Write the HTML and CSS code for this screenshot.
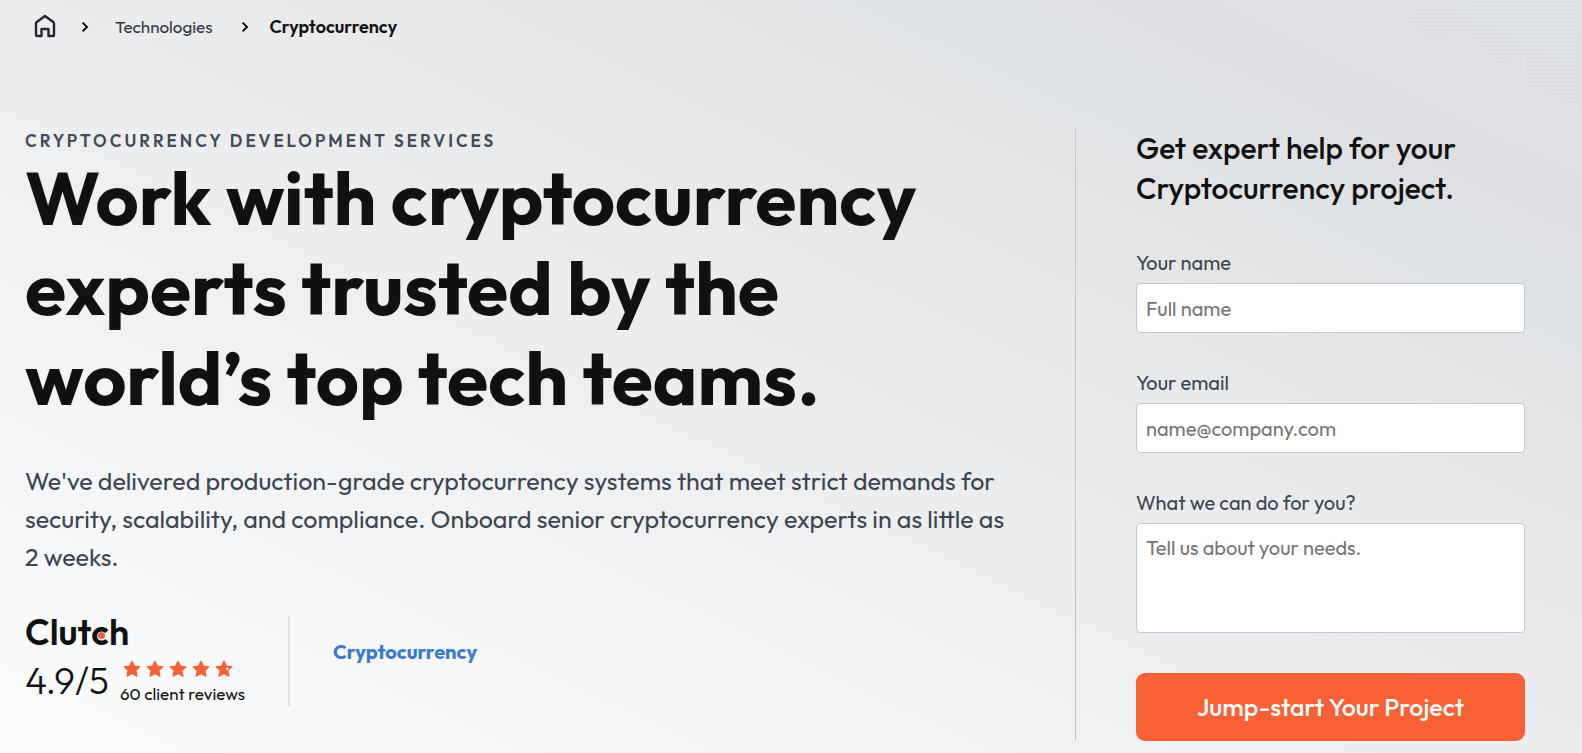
FILE: index.html
```html
<!DOCTYPE html>
<html lang="en">
<head>
<meta charset="utf-8">
<meta name="viewport" content="width=device-width, initial-scale=1">
<title>Cryptocurrency Development Services</title>
<link rel="stylesheet" href="styles.css">
</head>
<body>
<svg class="defs" aria-hidden="true">
  <symbol id="chevron" viewBox="0 0 8 12"><path d="M1.6 1.6 6 6 1.6 10.4" fill="none" stroke="currentColor" stroke-width="2"/></symbol>
  <symbol id="star" viewBox="0 0 18 18"><path d="M9 1.300 11.400 6.100 16.800 6.800 12.900 10.500 13.900 16.200 9 13.500 4.100 16.200 5.100 10.500 1.200 6.800 6.600 6.100Z" fill="currentColor" stroke="currentColor" stroke-width="1.2" stroke-linejoin="round"/></symbol>
</svg>
<nav class="breadcrumb" aria-label="Breadcrumb">
  <a class="home" href="#" aria-label="Home">
    <svg width="22" height="24" viewBox="0 0 22 24"><path d="M2 9.6Q2 8.6 2.8 8L11 2l8.200 6Q20 8.600 20 9.600V21q0 1-1 1h-4.500v-7h-7v7H3q-1 0-1-1Z" fill="none" stroke="currentColor" stroke-width="2.400" stroke-linejoin="round"/></svg>
  </a>
  <svg class="chevron" aria-hidden="true"><use href="#chevron"/></svg>
  <a class="crumb" href="#">Technologies</a>
  <svg class="chevron chevron-last" aria-hidden="true"><use href="#chevron"/></svg>
  <span class="current" aria-current="page">Cryptocurrency</span>
</nav>
<main class="hero">
  <section class="intro">
    <p class="eyebrow">Cryptocurrency development services</p>
    <h1 class="title">Work with cryptocurrency experts trusted by the world’s top tech teams.</h1>
    <p class="lead">We've delivered production-grade cryptocurrency systems that meet strict demands for security, scalability, and compliance. Onboard senior cryptocurrency experts in as little as 2 weeks.</p>
    <div class="proof">
      <div class="clutch">
        <div class="logo">Clut<span class="logo-c">c</span>h</div>
        <div class="rating">
          <span class="score">4.9/5</span>
          <div class="reviews">
            <div class="stars" role="img" aria-label="4.9 out of 5 stars">
              <svg class="star"><use href="#star"/></svg>
              <svg class="star"><use href="#star"/></svg>
              <svg class="star"><use href="#star"/></svg>
              <svg class="star"><use href="#star"/></svg>
              <svg class="star" viewBox="0 0 18 18"><use href="#star" width="18" height="18"/><path d="m10.800 7.800 3.600.3-2.500 2.500Z" fill="#fff"/></svg>
            </div>
            <span class="count">60 client reviews</span>
          </div>
        </div>
      </div>
      <a class="tag" href="#">Cryptocurrency</a>
    </div>
  </section>
  <form class="contact">
    <h2 class="contact-title">Get expert help for your Cryptocurrency project.</h2>
    <div class="field">
      <label for="name">Your name</label>
      <input id="name" type="text" placeholder="Full name">
    </div>
    <div class="field">
      <label for="email">Your email</label>
      <input id="email" type="email" placeholder="name@company.com">
    </div>
    <div class="field">
      <label for="needs">What we can do for you?</label>
      <textarea id="needs" placeholder="Tell us about your needs."></textarea>
    </div>
    <button class="submit" type="submit">Jump-start Your Project</button>
  </form>
</main>
</body>
</html>
```
FILE: styles.css
```css
* { box-sizing: border-box; }

body {
  position: relative;
  margin: 0;
  min-height: 100vh;
  font-family: Outfit, Lato, sans-serif;
  color: #111;
  background: linear-gradient(to top right, #fcfcfc 0%, #f8f9fa 12%, #f2f3f5 30%, #ebecee 50%, #e6e8e9 64%, #e3e4e6 73%, #dfe3e6 79%, #dedfe3 85%, #dfe0e4 92%, #e0e3e6 100%);
}

body::before {
  content: "";
  position: absolute;
  top: 0;
  right: 0;
  width: 184px;
  height: 110px;
  background: radial-gradient(circle, #c9d2d8 0 1px, transparent 1px) 0 0 / 4px 4px;
  clip-path: polygon(0 12%, 45% 0, 100% 0, 100% 100%, 68% 75%, 70% 50%, 55% 60%, 40% 32%, 18% 35%);
  opacity: .4;
}

h1, h2, p { margin: 0; }
a { color: inherit; text-decoration: none; }

.defs { position: absolute; width: 0; height: 0; }

.breadcrumb {
  position: relative;
  display: flex;
  align-items: center;
  height: 52px;
  padding-left: 34px;
  font-size: 18px;
}
.home { display: flex; color: #2b2730; }
.chevron { width: 8px; height: 12px; margin: 2px 26px 0 25px; }
.chevron-last { margin: 2px 21px 0 28px; }
.crumb { font-size: 17px; color: #333840; }
.current { font-weight: 600; }

.hero {
  display: grid;
  grid-template-columns: minmax(0, 7fr) minmax(0, 3fr);
  padding: 76px 57px 12px 25px;
}

.intro { padding-right: 60px; }
.eyebrow {
  font-size: 17px;
  line-height: 25px;
  font-weight: 600;
  letter-spacing: 3px;
  text-transform: uppercase;
  color: #424b57;
}
.title {
  font-size: 75px;
  line-height: 90px;
  font-weight: 700;
}
.lead {
  margin-top: 39px;
  font-size: 25px;
  line-height: 38px;
  color: #3c4550;
}

.proof { display: flex; margin-top: 40px; }
.clutch {
  height: 90px;
  padding-right: 43px;
  border-right: 2px solid #dedfe2;
}
.logo {
  font-size: 36px;
  line-height: 32px;
  font-weight: 600;
}
.logo-c { position: relative; }
.logo-c::after {
  content: "";
  position: absolute;
  left: 7px;
  bottom: 15px;
  width: 7px;
  height: 7px;
  border-radius: 50%;
  background: #f76135;
}
.rating { display: flex; gap: 11px; margin-top: 10px; }
.score { font-size: 37px; line-height: 46px; font-weight: 300; }
.stars { display: flex; gap: 5px; padding: 2px 0 0 3px; color: #f76135; }
.star { width: 18px; height: 18px; }
.count { display: block; font-size: 17px; line-height: 32px; }
.tag {
  padding: 23px 0 0 43px;
  font-size: 20px;
  line-height: 26px;
  font-weight: 700;
  color: #3a7bc8;
}

.contact {
  padding-left: 60px;
  border-left: 1px solid #c0c5ca;
}
.contact-title {
  margin-bottom: 43px;
  font-size: 30px;
  line-height: 40px;
  font-weight: 500;
}
.field { display: flex; flex-direction: column; }
.field + .field { margin-top: 38px; }
label { font-size: 20px; line-height: 24px; margin-bottom: 8px; color: #3c4550; }
input, textarea {
  width: 100%;
  padding: 0 9px;
  border: 1px solid #c0c7ce;
  border-radius: 4px;
  background: #fff;
  font: inherit;
  font-size: 20px;
  line-height: 26px;
}
input { height: 50px; }
textarea { display: block; height: 110px; padding-top: 11px; resize: none; }
::placeholder { color: #757575; opacity: 1; }
.submit {
  width: 100%;
  height: 68px;
  margin-top: 40px;
  border: 0;
  border-radius: 9px;
  background: #f76135;
  color: #fff;
  font: inherit;
  font-size: 25px;
  font-weight: 500;
}
```
